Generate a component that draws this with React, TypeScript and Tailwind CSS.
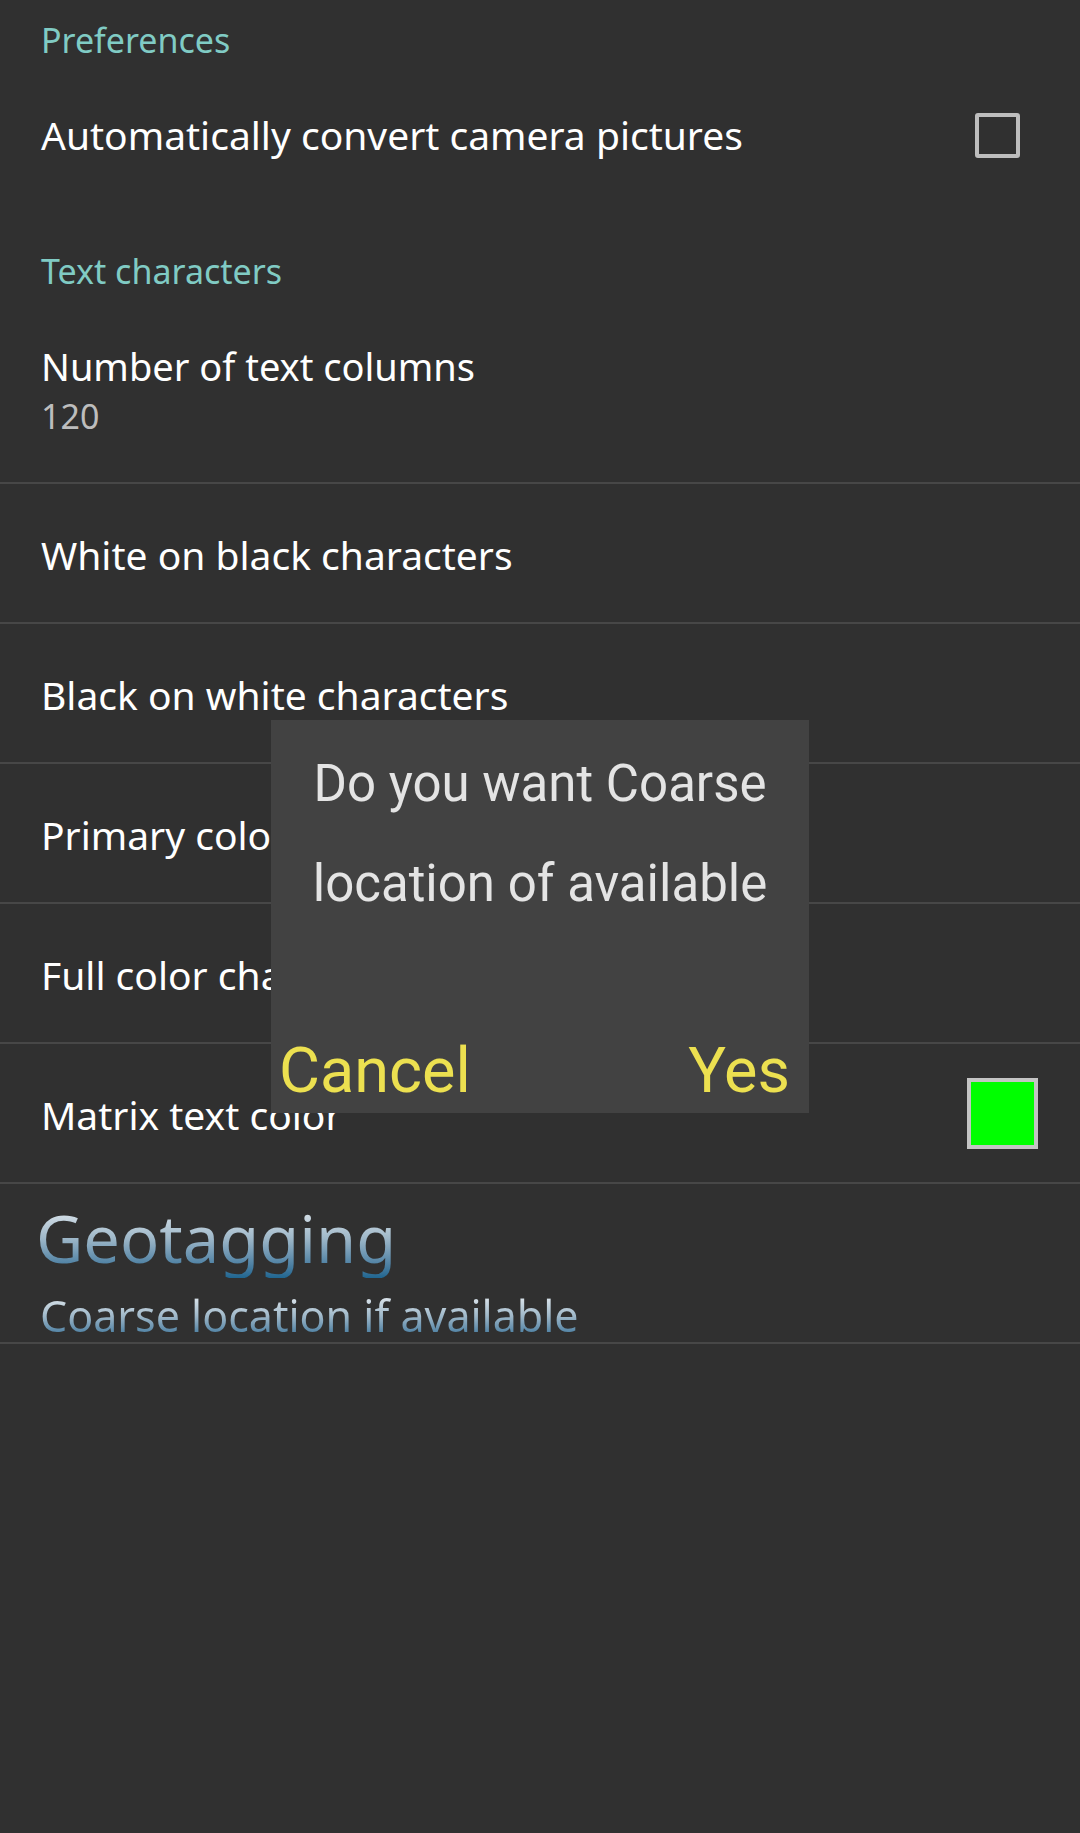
import React from 'react';

const font = { fontFamily: '"Noto Sans", "Open Sans", sans-serif' };

function Category({ title, className = '' }: { title: string; className?: string }) {
  return (
    <div className={`h-[80px] flex items-center pl-[41px] text-[34px] text-[#80cbc4] ${className}`}>
      {title}
    </div>
  );
}

function Row({ title, children }: { title: string; children?: React.ReactNode }) {
  return (
    <div className="h-[140px] border-b-2 border-[#474747] flex items-center justify-between pl-[41px]">
      <span className="text-[39px] text-white mt-[4px]">{title}</span>
      {children}
    </div>
  );
}

function GradientText({ children, className }: { children: React.ReactNode; className: string }) {
  return (
    <span className={`inline-block bg-gradient-to-b from-[#f4f6f8] via-[#9fb8c9] to-[#1f6690] bg-clip-text text-transparent ${className}`}>
      {children}
    </span>
  );
}

export default function App() {
  return (
    <div className="relative w-[1080px] h-[1833px] bg-[#303030] overflow-hidden" style={font}>
      <Category title="Preferences" />

      <div className="h-[110px] flex items-center justify-between pl-[41px] pr-[60px]">
        <span className="text-[39px] text-white">Automatically convert camera pictures</span>
        <div className="w-[45px] h-[45px] border-[4px] border-[#bdbdbd] rounded-[3px]" />
      </div>

      <Category title="Text characters" className="mt-[41px]" />

      <div className="h-[173px] border-b-2 border-[#474747] pl-[41px] pt-[31px] flex flex-col">
        <span className="text-[38px] leading-[48px] text-white">Number of text columns</span>
        <span className="text-[34px] leading-[40px] mt-[6px] text-[#bdbdbd]">120</span>
      </div>

      <Row title="White on black characters" />
      <Row title="Black on white characters" />
      <Row title="Primary color characters" />
      <Row title="Full color characters" />
      <Row title="Matrix text color">
        <div className="w-[71px] h-[71px] mr-[42px] border-[4px] border-[#c4c4c4] bg-[#00ff00]" />
      </Row>

      <div className="h-[160px] border-b-2 border-[#474747] pl-[36px] flex flex-col">
        <GradientText className="text-[65px] leading-[80px] mt-[14px]">Geotagging</GradientText>
        <GradientText className="text-[43px] leading-[52px] ml-[4px] mt-[12px]">Coarse location if available</GradientText>
      </div>

      {/* dialog overlay */}
      <div
        className="absolute left-[271px] top-[720px] w-[538px] h-[393px] bg-[#424242] flex flex-col"
        style={{ fontFamily: 'Roboto, "Noto Sans", sans-serif' }}
      >
        <div className="flex flex-col items-center pt-[14px] text-[51px] leading-[100px] text-[#e4e4e4]">
          <span>Do you want Coarse</span>
          <span>location of available</span>
        </div>
        <div className="mt-auto flex justify-between items-end px-[8px] pb-[6px] text-[63px] leading-[72px] text-[#ece050]">
          <span>Cancel</span>
          <span className="mr-[11px]">Yes</span>
        </div>
      </div>
    </div>
  );
}
